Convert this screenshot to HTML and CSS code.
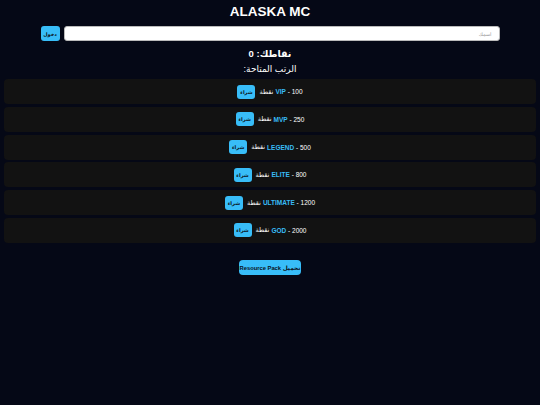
FILE: index.html
```html
<!DOCTYPE html>
<html lang="ar" dir="rtl">
<head>
  <meta charset="UTF-8" />
  <meta name="viewport" content="width=device-width, initial-scale=1.0" />
  <title>ALASKA MC</title>
  <link rel="stylesheet" href="styles.css">
</head>
<body>
  <h1 class="title">ALASKA MC</h1>

  <!-- تسجيل الدخول -->
  <div class="login">
    <input class="name-input" type="text" placeholder="اسمك">
    <button class="btn login-btn">دخول</button>
  </div>

  <div class="points">نقاطك: <span id="points">0</span></div>
  <div class="ranks-title">الرتب المتاحة:</div>

  <div class="ranks">
    <div class="rank">
      <span class="price" dir="ltr"><b class="rank-name">VIP</b> - 100</span>
      <span class="unit">نقطة</span>
      <button class="btn buy">شراء</button>
    </div>
    <div class="rank">
      <span class="price" dir="ltr"><b class="rank-name">MVP</b> - 250</span>
      <span class="unit">نقطة</span>
      <button class="btn buy">شراء</button>
    </div>
    <div class="rank">
      <span class="price" dir="ltr"><b class="rank-name">LEGEND</b> - 500</span>
      <span class="unit">نقطة</span>
      <button class="btn buy">شراء</button>
    </div>
    <div class="rank">
      <span class="price" dir="ltr"><b class="rank-name">ELITE</b> - 800</span>
      <span class="unit">نقطة</span>
      <button class="btn buy">شراء</button>
    </div>
    <div class="rank">
      <span class="price" dir="ltr"><b class="rank-name">ULTIMATE</b> - 1200</span>
      <span class="unit">نقطة</span>
      <button class="btn buy">شراء</button>
    </div>
    <div class="rank">
      <span class="price" dir="ltr"><b class="rank-name">GOD</b> - 2000</span>
      <span class="unit">نقطة</span>
      <button class="btn buy">شراء</button>
    </div>
  </div>

  <div class="download">
    <button class="btn pack-btn">تحميل Resource Pack</button>
  </div>
</body>
</html>
```

FILE: styles.css
```css
body {
  margin: 0;
  padding: 0 4px;
  background: #050816;
  color: #fff;
  font-family: "Liberation Sans", "DejaVu Sans", sans-serif;
  direction: rtl;
}

.title {
  margin: 3.5px 0 0;
  font-size: 13.5px;
  line-height: 16px;
  text-align: center;
}

/* تسجيل الدخول */
.login {
  width: 459px;
  margin: 6.5px auto 0;
  display: flex;
  gap: 4px;
}
.name-input {
  flex: 1;
  height: 15px;
  box-sizing: border-box;
  padding: 0 7px;
  border: 1px solid #bbb;
  border-radius: 3px;
  background: #fff;
  font-family: inherit;
  font-size: 5px;
  outline: none;
}
.name-input::placeholder {
  color: #999;
}

.btn {
  border: none;
  border-radius: 3px;
  background: #38bdf8;
  color: #0b1220;
  font-family: inherit;
  font-weight: bold;
  font-size: 5px;
  padding: 0;
  cursor: pointer;
}
.login-btn {
  width: 19px;
  height: 15px;
}

.points {
  margin-top: 7px;
  font-size: 9.5px;
  line-height: 12px;
  font-weight: bold;
  text-align: center;
}
.ranks-title {
  margin-top: 3.5px;
  font-size: 9px;
  line-height: 11px;
  text-align: center;
}

/* الرتب */
.ranks {
  margin-top: 4.5px;
  display: flex;
  flex-direction: column;
  gap: 2.8px;
}
.rank {
  height: 25px;
  background: #121212;
  border-radius: 4px;
  display: flex;
  justify-content: center;
  align-items: center;
  gap: 2px;
  font-size: 6.5px;
}
.rank-name {
  color: #38bdf8;
}
.buy {
  width: 18px;
  height: 14px;
  margin-right: 2px;
}

.download {
  margin-top: 13px;
  text-align: center;
}
.pack-btn {
  width: 62px;
  height: 15px;
  border-radius: 4px;
  font-size: 5.8px;
}
```
